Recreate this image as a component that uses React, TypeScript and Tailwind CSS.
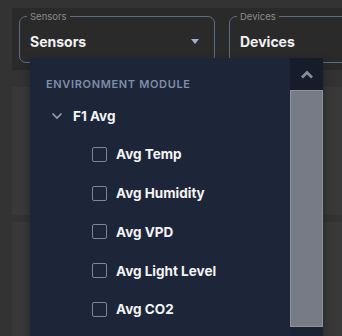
import React from "react";

const font = { fontFamily: "Inter, 'Noto Sans', sans-serif" };

function Field({ label, value, arrow, className }: { label: string; value: string; arrow?: boolean; className: string }) {
  return (
    <div className={`relative h-[47px] rounded-[7px] border border-[#5d6c82] ${className}`}>
      <span className="absolute left-[7px] top-[-7px] bg-[#2a2a2a] px-[3px] text-[9.5px] leading-[14px] text-[#8a8a8a]">
        {label}
      </span>
      <div className="flex h-full items-center pl-[10px] pr-[15px] pt-[4px]">
        <span className="flex-1 text-[14px] font-bold text-[#f2f2f2]">{value}</span>
        {arrow && (
          <span className="h-0 w-0 border-x-[4.5px] border-t-[5px] border-x-transparent border-t-[#9db2cf]" />
        )}
      </div>
    </div>
  );
}

const items = ["Avg Temp", "Avg Humidity", "Avg VPD", "Avg Light Level", "Avg CO2"];

export default function App() {
  return (
    <div className="relative h-[336px] w-[342px] overflow-hidden bg-[#333333]" style={font}>
      <div className="ml-[12px] mt-[8px] flex h-[62px] gap-[14px] bg-[#2a2a2a] pl-[7px] pt-[8px]">
        <Field label="Sensors" value="Sensors" arrow className="w-[196px] shrink-0" />
        <Field label="Devices" value="Devices" className="w-[200px] shrink-0" />
      </div>
      <div className="ml-[12px] mt-[17px] h-[128px] bg-[#393939]" />
      <div className="ml-[12px] mt-[7px] h-[130px] bg-[#393939]" />

      <div className="absolute left-[30px] top-[58px] flex h-[290px] w-[293px] bg-[#1d2639] shadow-[0_4px_10px_rgba(0,0,0,0.35)]">
        <div className="flex-1 pl-[16px] pt-[19px]">
          <div className="text-[11px] font-semibold uppercase leading-[14px] tracking-[0.06em] text-[#7f8ea8]">
            Environment Module
          </div>
          <div className="mt-[15px] flex h-[20px] items-center">
            <svg width="12" height="8" viewBox="0 0 12 8" className="ml-[5px]">
              <path d="M1.5 1.5 L6 6 L10.5 1.5" fill="none" stroke="#8fa0bb" strokeWidth="1.6" />
            </svg>
            <span className="ml-[10px] text-[13.5px] font-bold text-[#f4f4f4]">F1 Avg</span>
          </div>
          <div className="mt-[9px] flex flex-col">
            {items.map((t) => (
              <div key={t} className="flex h-[38.8px] items-center pl-[46px]">
                <span className="h-[15px] w-[15px] rounded-[2px] border-[1.5px] border-[#7b8597]" />
                <span className="ml-[9px] text-[13.5px] font-bold text-[#f4f4f4]">{t}</span>
              </div>
            ))}
          </div>
        </div>
        <div className="flex w-[33px] flex-col bg-[#1a2233]">
          <div className="flex h-[32px] items-center justify-center bg-[#161c2a]">
            <svg width="14" height="9" viewBox="0 0 14 9">
              <path d="M2 7.5 L7 2.5 L12 7.5" fill="none" stroke="#858d9c" strokeWidth="2.8" />
            </svg>
          </div>
          <div className="h-[237px] border border-[#8d929b] bg-[#767b86]" />
        </div>
      </div>
    </div>
  );
}
